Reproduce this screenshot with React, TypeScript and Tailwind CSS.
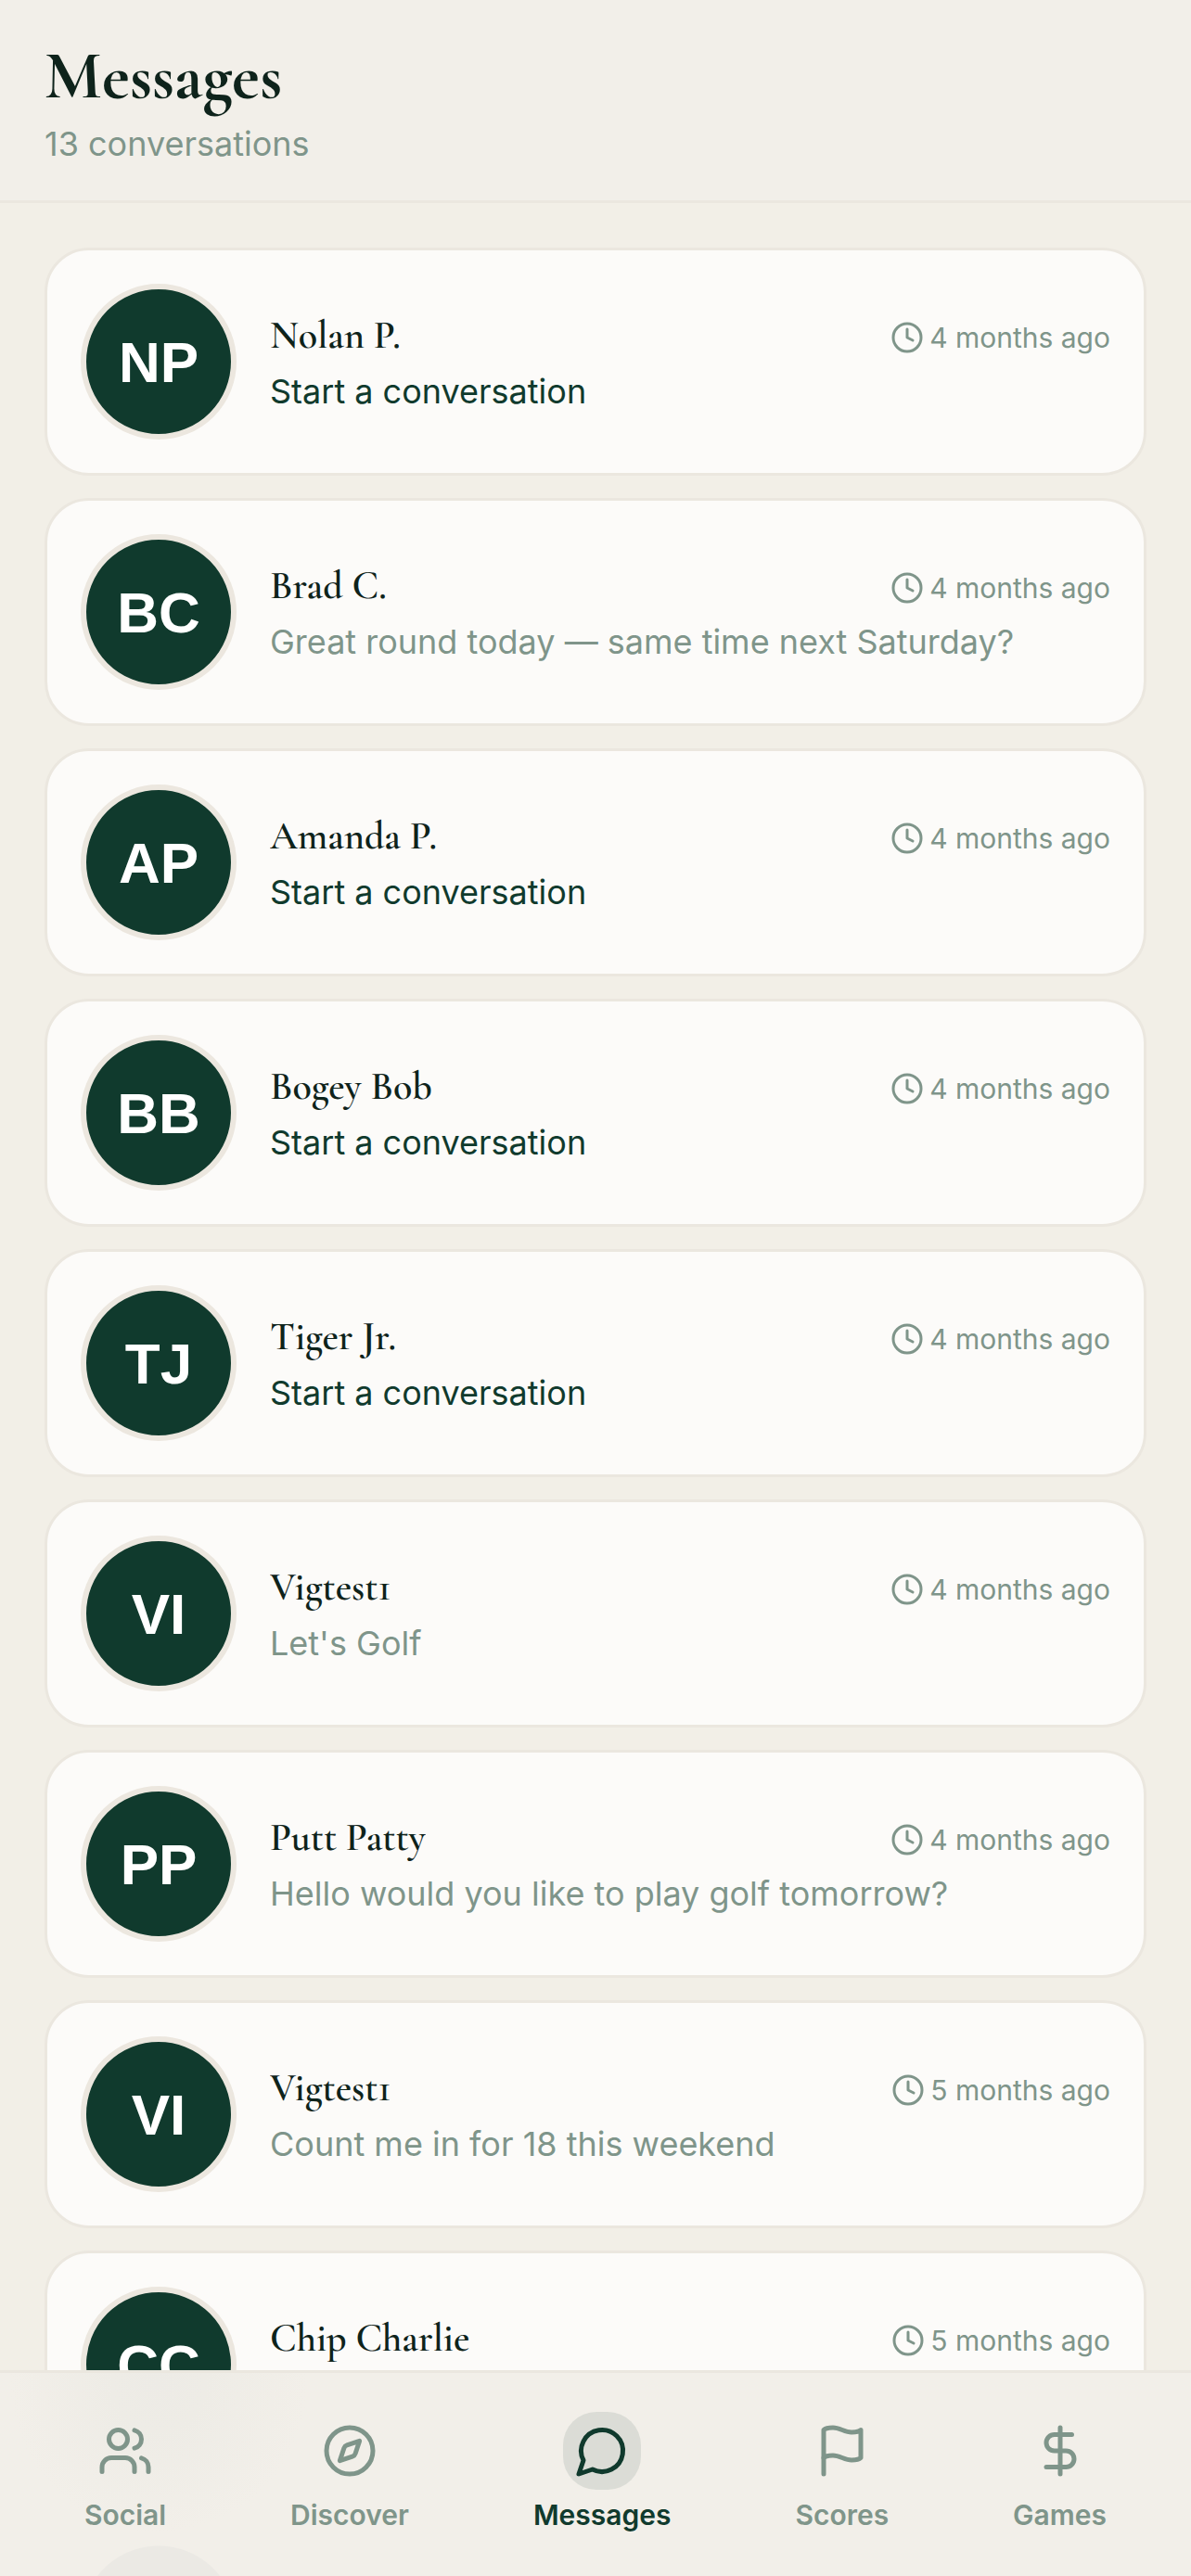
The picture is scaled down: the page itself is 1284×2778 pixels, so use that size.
import { Clock, Compass, DollarSign, Users } from "lucide-react";
import type { ReactNode } from "react";

type Conversation = {
  id: number;
  name: string;
  initials: string;
  time: string;
  preview?: string;
};

const TOTAL_CONVERSATIONS = 13;

const conversations: Conversation[] = [
  { id: 1, name: "Nolan P.", initials: "NP", time: "4 months ago" },
  {
    id: 2,
    name: "Brad C.",
    initials: "BC",
    time: "4 months ago",
    preview: "Great round today — same time next Saturday?",
  },
  { id: 3, name: "Amanda P.", initials: "AP", time: "4 months ago" },
  { id: 4, name: "Bogey Bob", initials: "BB", time: "4 months ago" },
  { id: 5, name: "Tiger Jr.", initials: "TJ", time: "4 months ago" },
  { id: 6, name: "Vigtest1", initials: "VI", time: "4 months ago", preview: "Let's Golf" },
  {
    id: 7,
    name: "Putt Patty",
    initials: "PP",
    time: "4 months ago",
    preview: "Hello would you like to play golf tomorrow?",
  },
  {
    id: 8,
    name: "Vigtest1",
    initials: "VI",
    time: "5 months ago",
    preview: "Count me in for 18 this weekend",
  },
  { id: 9, name: "Chip Charlie", initials: "CC", time: "5 months ago" },
];

function ChatIcon() {
  return (
    <svg viewBox="0 0 24 24" className="size-[60px]" fill="none" stroke="currentColor" strokeWidth="2" strokeLinecap="round" strokeLinejoin="round" aria-hidden="true">
      <path d="M7.9 20A9 9 0 1 0 4 16.1L2 22Z" />
    </svg>
  );
}

function FlagIcon() {
  return (
    <svg viewBox="0 0 24 24" className="size-[60px]" fill="none" stroke="currentColor" strokeWidth="2" strokeLinecap="round" strokeLinejoin="round" aria-hidden="true">
      <path d="M4 15s1-1 4-1 5 2 8 2 4-1 4-1V3s-1 1-4 1-5-2-8-2-4 1-4 1z" />
      <line x1="4" x2="4" y1="22" y2="15" />
    </svg>
  );
}

const tabs: { label: string; icon: ReactNode }[] = [
  { label: "Social", icon: <Users className="size-[60px]" /> },
  { label: "Discover", icon: <Compass className="size-[60px]" /> },
  { label: "Messages", icon: <ChatIcon /> },
  { label: "Scores", icon: <FlagIcon /> },
  { label: "Games", icon: <DollarSign className="size-[60px]" /> },
];

function ConversationCard({ name, initials, time, preview }: Conversation) {
  return (
    <li>
      <button
        type="button"
        className="flex w-full items-center gap-9 rounded-[48px] border-3 border-[#ebe7df] bg-[#fcfbf9] p-9 text-left"
      >
        <span className="flex size-[168px] shrink-0 items-center justify-center rounded-full border-6 border-[#ece7df] bg-[#103a2d] font-['Liberation_Sans',sans-serif] text-[62px] font-bold text-white">
          {initials}
        </span>
        <span className="min-w-0 flex-1 pt-1">
          <span className="flex items-center justify-between gap-6">
            <span className="truncate font-['Cormorant_Garamond','Liberation_Serif',serif] text-[42px] leading-[60px] font-semibold text-[#0e231b]">
              {name}
            </span>
            <span className="flex shrink-0 items-center gap-1.5 pt-1 text-[30px] leading-[45px] text-[#7f958a]">
              <Clock className="size-9" />
              {time}
            </span>
          </span>
          <span
            className={`block truncate text-[36px] leading-[60px] ${
              preview ? "text-[#7f958a]" : "text-[#103a2d]"
            }`}
          >
            {preview ?? "Start a conversation"}
          </span>
        </span>
      </button>
    </li>
  );
}

export default function App() {
  return (
    <div className="h-screen overflow-y-auto bg-[#f2efe7] font-['Inter',sans-serif] [scrollbar-width:none]">
      <header className="sticky top-0 z-10 border-b-3 border-[#ebe7df] bg-[#f2efe9] px-12 pt-[46px] pb-[34px]">
        <h1 className="font-['Cormorant_Garamond','Liberation_Serif',serif] text-[72px] leading-[72px] font-bold text-[#0e231b]">
          Messages
        </h1>
        <p className="mt-2.5 text-[36px] leading-[54px] text-[#7f958a]">
          {TOTAL_CONVERSATIONS} conversations
        </p>
      </header>

      <main className="px-12 pt-12 pb-64">
        <ul className="flex flex-col gap-6">
          {conversations.map((c) => (
            <ConversationCard key={c.id} {...c} />
          ))}
        </ul>
      </main>

      <nav
        aria-label="Main"
        className="fixed inset-x-0 bottom-0 z-20 flex justify-around border-t-3 border-[#ebe7df] bg-[#f2efe9] bg-[radial-gradient(circle_at_171px_12px,#edebe6_0px,#eeece6_50px,#f2efe900_160px),radial-gradient(circle_at_171px_270px,#ebe9e4_83px,#f2efe900_84px)] px-6 pt-[42px] pb-12 bg-no-repeat"
      >
        {tabs.map(({ label, icon }) => {
          const active = label === "Messages";
          return (
            <a
              key={label}
              href={`#${label.toLowerCase()}`}
              aria-current={active ? "page" : undefined}
              className={`flex flex-col items-center gap-[9px] px-9 text-[30px] leading-9 font-semibold ${
                active ? "text-[#103a2d]" : "text-[#7f958a]"
              }`}
            >
              <span className={`rounded-[36px] p-3 ${active ? "bg-[#103a2d]/10" : ""}`}>{icon}</span>
              {label}
            </a>
          );
        })}
      </nav>
    </div>
  );
}
